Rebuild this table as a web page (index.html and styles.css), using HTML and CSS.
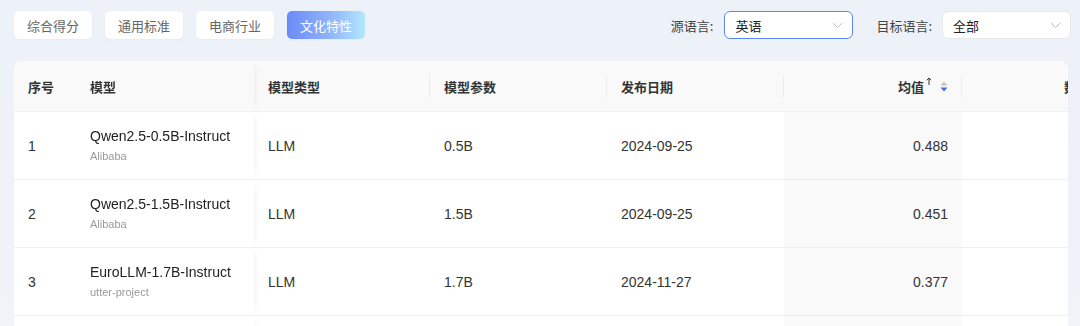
FILE: index.html
```html
<!DOCTYPE html>
<html lang="zh">
<head>
<meta charset="utf-8">
<link rel="stylesheet" href="styles.css">
</head>
<body>
<div class="page">
  <div class="toolbar">
    <div class="tabs">
      <button class="tab">综合得分</button>
      <button class="tab">通用标准</button>
      <button class="tab">电商行业</button>
      <button class="tab active">文化特性</button>
    </div>
    <div class="filters">
      <label class="flabel">源语言:</label>
      <div class="select focused"><span>英语</span><svg class="chev" width="11" height="7" viewBox="0 0 11 7"><path d="M1 1l4.5 4.5L10 1" fill="none" stroke="#c0c0c0" stroke-width="1"/></svg></div>
      <label class="flabel second">目标语言:</label>
      <div class="select"><span>全部</span><svg class="chev" width="11" height="7" viewBox="0 0 11 7"><path d="M1 1l4.5 4.5L10 1" fill="none" stroke="#c0c0c0" stroke-width="1"/></svg></div>
    </div>
  </div>
  <div class="table-wrap">
    <table class="grid">
      <colgroup>
        <col class="c-seq"><col class="c-model"><col class="c-type"><col class="c-param"><col class="c-date"><col class="c-avg"><col class="c-more">
      </colgroup>
      <thead>
        <tr>
          <th class="fix fix1">序号</th>
          <th class="fix fix2">模型</th>
          <th class="sep">模型类型</th>
          <th class="sep">模型参数</th>
          <th class="sep">发布日期</th>
          <th class="sep num"><span class="avg">均值<svg class="up" width="6" height="8" viewBox="0 0 6 8"><path d="M3 8V1M0.8 3.2L3 1l2.2 2.2" fill="none" stroke="#333" stroke-width="1"/></svg><svg class="sorter" width="8" height="13" viewBox="0 0 8 13"><path d="M4 1.5L7.5 5.5H0.5Z" fill="#c4c4c4"/><path d="M4 11.5L7.5 7.5H0.5Z" fill="#3b6ef5"/></svg></span></th>
          <th class="more">数据集</th>
        </tr>
      </thead>
      <tbody>
        <tr>
          <td class="fix fix1">1</td>
          <td class="fix fix2"><div class="mname">Qwen2.5-0.5B-Instruct</div><div class="morg">Alibaba</div></td>
          <td>LLM</td><td>0.5B</td><td>2024-09-25</td><td class="num sorted">0.488</td><td></td>
        </tr>
        <tr>
          <td class="fix fix1">2</td>
          <td class="fix fix2"><div class="mname">Qwen2.5-1.5B-Instruct</div><div class="morg">Alibaba</div></td>
          <td>LLM</td><td>1.5B</td><td>2024-09-25</td><td class="num sorted">0.451</td><td></td>
        </tr>
        <tr>
          <td class="fix fix1">3</td>
          <td class="fix fix2"><div class="mname">EuroLLM-1.7B-Instruct</div><div class="morg">utter-project</div></td>
          <td>LLM</td><td>1.7B</td><td>2024-11-27</td><td class="num sorted">0.377</td><td></td>
        </tr>
        <tr>
          <td class="fix fix1"></td>
          <td class="fix fix2"></td>
          <td></td><td></td><td></td><td class="num sorted"></td><td></td>
        </tr>
      </tbody>
    </table>
  </div>
</div>
</body>
</html>
```
FILE: styles.css
```css
* { box-sizing: border-box; }
html, body { margin: 0; padding: 0; }
body {
  width: 1080px;
  height: 326px;
  overflow: hidden;
  background: linear-gradient(180deg, #edf1f8 0%, #f0f3f8 100%);
  font-family: "Liberation Sans", "Noto Sans CJK SC", sans-serif;
  color: #333;
}
.page { padding: 11px 9px 0 14px; }
.toolbar { display: flex; align-items: center; justify-content: space-between; height: 28px; }
.tabs { display: flex; gap: 13px; }
.tab {
  width: 78px; height: 28px;
  border: none; border-radius: 5px;
  background: #fff;
  font-family: "Noto Sans CJK SC", sans-serif;
  font-size: 13px; color: #666;
  padding: 0;
  box-shadow: 0 1px 3px rgba(30, 60, 120, 0.04);
}
.tab.active {
  color: #fff;
  background: linear-gradient(90deg, #6a8bf7 0%, #8fb4fb 55%, #b4e6fd 100%);
}
.filters { display: flex; align-items: center; }
.flabel { font-family: "Noto Sans CJK SC", sans-serif; font-size: 13px; color: #444; margin-right: 11px; }
.flabel.second { margin-left: 23px; margin-right: 10px; }
.select {
  width: 129px; height: 28px;
  background: #fff;
  border: 1px solid #e6e8eb;
  border-radius: 6px;
  display: flex; align-items: center; justify-content: space-between;
  padding: 0 9px 0 10px;
  font-family: "Noto Sans CJK SC", sans-serif;
  font-size: 13px; color: #222;
}
.select.focused { border-color: #5b86f7; }
.chev { display: block; }

.table-wrap {
  margin-top: 22px;
  width: 1054px;
  overflow: hidden;
  background: #fff;
  border-radius: 8px 8px 0 0;
}
.grid {
  border-collapse: separate;
  border-spacing: 0;
  table-layout: fixed;
  width: 1191px;
  font-size: 14px;
}
.c-seq { width: 62px; }
.c-model { width: 178px; }
.c-type { width: 176px; }
.c-param { width: 177px; }
.c-date { width: 177px; }
.c-avg { width: 178px; }
.c-more { width: 243px; }

th {
  height: 51px;
  background: #f9f9fa;
  text-align: left;
  font-family: "Noto Sans CJK SC", sans-serif;
  font-weight: 600;
  font-size: 13px;
  color: #333;
  padding: 0 14px;
  border-bottom: 1px solid #f0f0f0;
  position: relative;
  white-space: nowrap;
}
th.more { text-align: center; }
th.sep::after {
  content: "";
  position: absolute;
  right: 0; top: 15px;
  width: 1px; height: 21px;
  background: #ececec;
}
td {
  height: 68px;
  padding: 0 14px;
  border-bottom: 1px solid #efefef;
  background: #fff;
  color: #333;
  vertical-align: middle;
  white-space: nowrap;
}
.num { text-align: right; }
td.sorted { background: #fafafa; }
.fix { position: sticky; z-index: 2; }
.fix1 { left: 0; }
.fix2 { left: 62px; box-shadow: 6px 0 6px -5px rgba(0, 0, 0, 0.06); }
.mname { font-size: 14px; color: #222; line-height: 18px; margin-top: -1px; }
.morg { font-size: 11px; color: #9a9a9a; line-height: 16px; margin-top: 3px; }
.avg { display: inline-flex; align-items: center; }
.up { margin-left: 2px; position: relative; top: -5px; }
.sorter { margin-left: 8px; }
```
